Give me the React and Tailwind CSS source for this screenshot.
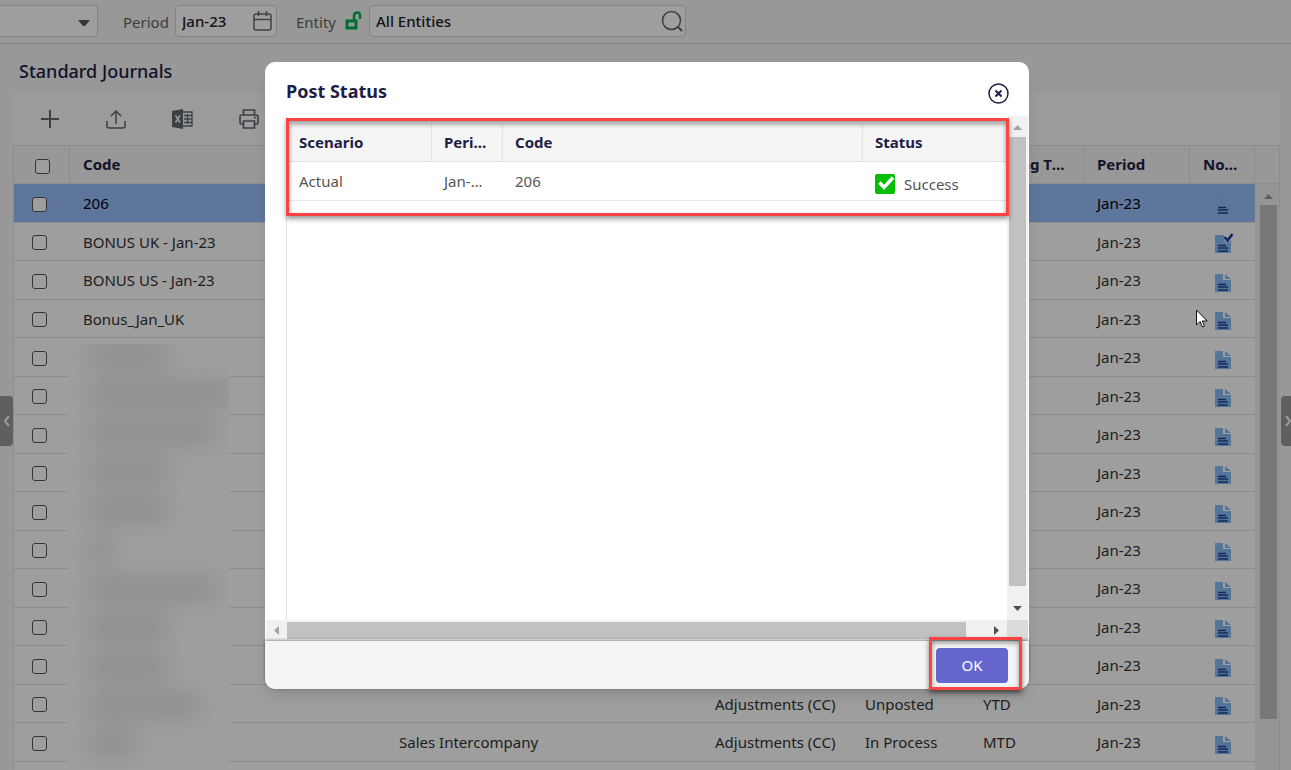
import React, { useState } from 'react';

const columns = [
  { id: 'code', label: 'Code', width: 'w-[316px]' },
  { id: 'description', label: 'Description', width: '' },
  { id: 'type', label: 'Journal Type', width: 'w-[150px]' },
  { id: 'status', label: 'Status', width: 'w-[118px]' },
  { id: 'posting', label: 'Posting Type', width: 'w-[114px]' },
  { id: 'period', label: 'Period', width: 'w-[106px]' },
  { id: 'notes', label: 'Notes', width: 'w-[65px]' },
];

const journals = [
  { code: '206', selected: true },
  { code: 'BONUS UK - Jan-23', checked: true },
  { code: 'BONUS US - Jan-23' },
  { code: 'Bonus_Jan_UK' },
  {}, {}, {}, {}, {}, {}, {}, {}, {},
  { type: 'Adjustments (CC)', status: 'Unposted', posting: 'YTD' },
  { description: 'Sales Intercompany', type: 'Adjustments (CC)', status: 'In Process', posting: 'MTD' },
];

// Widths of the hidden journal codes
const hiddenCodes = ['w-20', 'w-36', 'w-32', 'w-20', 'w-20', 'w-6', 'w-32', 'w-20', 'w-20', 'w-28', 'w-12'];

function NoteIcon({ checked, selected }) {
  const fill = selected ? '#91bdf6' : '#87bdf5';

  return (
    <svg className="block w-[18px] h-5 mt-[3px]" viewBox="0 0 18 20" aria-hidden="true">
      <path d={checked ? 'M0 2h9v5l3 3 4-3v13H0z' : 'M0 2h8v6h8v12H0z'} fill={fill} />
      {!checked && <path d="M10 2l6 5h-6z" fill={fill} />}
      <path d="M3 12.500h8M3 15h10M3 18h10" stroke="#253f8e" strokeWidth="1.3" />
      {checked && <path d="M9.500 4l3 3.500L17.500 1" stroke="#1c35a5" strokeWidth="2.5" fill="none" />}
    </svg>
  );
}

function TopBar() {
  return (
    <header className="flex items-center h-11 border-b border-[#d8d8d8] bg-[#f5f5f5] text-[#666]">
      <button aria-label="Scenario" className="flex items-center justify-end w-[98px] h-8 pr-[7px] -mt-px bg-white border border-l-0 border-[#d4d4d4] rounded-r-sm">
        <svg className="w-3 h-2 mt-1" viewBox="0 0 12 8"><path d="M0 1h12L7 7H5z" fill="#555b60" /></svg>
      </button>
      <label htmlFor="period" className="w-[45px] ml-[25px]">Period</label>
      <div className="flex items-center justify-between w-[102px] h-8 ml-[7px] pl-[6px] pr-[3px] -mt-px bg-white border border-[#d4d4d4] rounded-sm">
        <input id="period" defaultValue="Jan-23" className="w-16 text-[#222] font-medium outline-none" />
        <svg className="w-5 h-5 shrink-0" viewBox="0 0 20 20" fill="none" stroke="#666b70" strokeWidth="1.5">
          <rect x="1" y="3" width="17" height="16" rx="2" />
          <path d="M1 8.500h17M5.500 0v5M13.500 0v5" />
        </svg>
      </div>
      <label htmlFor="entity" className="w-10 ml-[19px]">Entity</label>
      <svg className="w-[17px] h-5 ml-[9px] -mt-1" viewBox="0 0 17 20" fill="none" stroke="#00b050" strokeWidth="3">
        <rect x="2" y="11" width="9" height="7" />
        <path d="M9 11V6c0-4 6-5 6-1v4" strokeWidth="2.500" />
      </svg>
      <div className="flex items-center justify-between w-[317px] h-8 ml-[7px] pl-[6px] pr-[2px] -mt-px bg-white border border-[#d4d4d4] rounded-sm">
        <input id="entity" defaultValue="All Entities" className="w-60 text-[#222] font-medium outline-none" />
        <svg className="w-[22px] h-[22px]" viewBox="0 0 22 22" fill="none" stroke="#60666b" strokeWidth="1.5">
          <circle cx="10.500" cy="10.500" r="9" />
          <path d="M17 17l4 4" strokeWidth="2" />
        </svg>
      </div>
    </header>
  );
}

function Toolbar() {
  return (
    <div className="flex items-center gap-[46px] h-[54px] shrink-0 pl-[27px] border-t border-[#eee] bg-[#fafafa] text-[#61686f]">
      <button aria-label="Add">
        <svg className="w-5 h-5" viewBox="0 0 20 20" stroke="currentColor" strokeWidth="2"><path d="M10 1v18M1 10h18" /></svg>
      </button>
      <button aria-label="Upload">
        <svg className="w-5 h-5" viewBox="0 0 20 20" fill="none" stroke="currentColor" strokeWidth="1.500">
          <path d="M1 12v5q0 2 2 2h14q2 0 2-2v-5M10 15V2M5 7l5-5 5 5" />
        </svg>
      </button>
      <button aria-label="Export to Excel">
        <svg className="w-[21px] h-5" viewBox="0 0 21 20">
          <path d="M0 2l11-2v20L0 18z" fill="currentColor" />
          <path d="M11 3h9v14h-9M12 6.500h8M12 10h8M12 13.500h8M15.500 5v10" fill="none" stroke="currentColor" strokeWidth="1.300" />
          <path d="M3.500 6.500l4.500 7M8 6.500l-4.500 7" stroke="#fafafa" strokeWidth="1.500" />
        </svg>
      </button>
      <button aria-label="Print">
        <svg className="w-5 h-5" viewBox="0 0 20 20" fill="none" stroke="currentColor" strokeWidth="1.700">
          <path d="M4.500 6V1h11v5M4.500 15H2.500Q1 15 1 13.500V8q0-2 2-2h14q2 0 2 2v5.500q0 1.500-1.500 1.500h-2M4.500 12h11v7h-11z" />
          <path d="M15 8.500h2" />
        </svg>
      </button>
    </div>
  );
}

function JournalTable() {
  return (
    <div className="relative flex flex-1 items-start border-x border-t border-[#e4e4e4] bg-white">
      <table className="flex-1 w-full table-fixed border-separate border-spacing-0">
        <thead>
          <tr className="h-[38px] bg-[#f5f5f5] text-left text-[#1e1e46]">
            <th className="w-14 p-0 border-r border-b border-[#e4e4e4]">
              <input type="checkbox" aria-label="Select all" className="block ml-[21px] w-[15px] h-[15px] mt-[3px] appearance-none rounded-[3px] border border-[#555] bg-white" />
            </th>
            {columns.map((col) => (
              <th key={col.id} className={`${col.width} pl-[13px] pr-3 pt-0 pb-[2px] truncate font-bold border-r border-b border-[#e4e4e4]`}>{col.label}</th>
            ))}
          </tr>
        </thead>
        <tbody className="text-[#333] [&>tr>td]:border-b [&>tr>td]:border-[#e4e4e4] [&>tr>td]:py-0">
          {journals.map((row, i) => (
            <tr key={i} className={`odd:h-[39px] even:h-[38px] ${row.selected ? 'bg-[#99bffc] text-black' : ''}`}>
              <td className="px-0">
                <input type="checkbox" aria-label={`Select row ${i + 1}`} className="block ml-[18px] mt-[2px] w-[15px] h-[15px] appearance-none rounded-[3px] border border-[#555] bg-white" />
              </td>
              <td className="px-[13px]">{row.code}</td>
              <td className="px-[13px]">{row.description}</td>
              <td className="px-[13px] whitespace-nowrap">{row.type}</td>
              <td className="px-[13px] whitespace-nowrap">{row.status}</td>
              <td className="px-[13px]">{row.posting}</td>
              <td className="px-[13px]">Jan-23</td>
              <td className="pl-[25px]">
                <NoteIcon checked={row.checked} selected={row.selected} />
              </td>
            </tr>
          ))}
        </tbody>
      </table>
      <div className="flex flex-col self-stretch w-6 shrink-0 bg-[#f0f0f0]">
        <div className="h-[38px] border-b border-[#e4e4e4] bg-[#f5f5f5]" />
        <div className="flex flex-col items-center w-[21px] ml-[3px]">
          <svg className="w-[9px] h-5 mt-px" viewBox="0 0 9 20"><path d="M0 14h9L4.500 9z" fill="#999" /></svg>
          <div className="w-[17px] h-[514px] bg-[#c1c1c1]" />
        </div>
      </div>
      <div className="absolute left-[54px] top-[198px] bottom-0 w-[161px] overflow-hidden bg-white">
        <div className="flex flex-col gap-[18px] pl-5 blur-[12px]">
          {hiddenCodes.map((width, i) => (
            <div key={i} className={`${width} h-[21px] shrink-0 bg-[#e2e2e2]`} />
          ))}
        </div>
      </div>
    </div>
  );
}

function PostStatusDialog({ onClose }) {
  return (
    <div role="dialog" aria-modal="true" aria-labelledby="post-status" className="relative flex flex-col w-[764px] h-[627px] rounded-[10px] bg-white shadow-lg">
      <div className="flex items-center justify-between h-[54px] pl-[21px] pr-5 pt-1">
        <h2 id="post-status" className="text-lg font-bold text-[#1e1e46]">Post Status</h2>
        <button aria-label="Close" onClick={onClose} className="mt-1">
          <svg className="w-[21px] h-[21px]" viewBox="0 0 21 21" fill="none" stroke="#1e1e46" strokeWidth="1.500">
            <circle cx="10.500" cy="10.500" r="9.500" />
            <path d="M7.500 7.500l6 6M13.500 7.500l-6 6" strokeWidth="2" />
          </svg>
        </button>
      </div>
      <div className="flex flex-1 min-h-0">
        <div className="flex-1 ml-[21px] pt-[7px] border-l border-[#e4e4e4]">
          <table className="w-full table-fixed border-separate border-spacing-0 text-left">
            <thead>
              <tr className="h-[39px] bg-[#f5f5f5] text-[#1e1e46] [&>th]:border-b [&>th]:border-[#e4e4e4] [&>th]:px-3 [&>th]:py-0 [&>th]:truncate">
                <th className="w-[145px] border-r">Scenario</th>
                <th className="w-[71px] border-r">Period</th>
                <th className="border-r">Code</th>
                <th className="w-36">Status</th>
              </tr>
            </thead>
            <tbody>
              <tr className="h-[39px] text-[#555] [&>td]:border-b [&>td]:border-[#e8e8e8] [&>td]:pl-3 [&>td]:pr-4 [&>td]:py-0 [&>td]:truncate">
                <td>Actual</td>
                <td>Jan-23</td>
                <td>206</td>
                <td>
                  <div className="flex items-center gap-[9px] mt-[6px]">
                    <svg className="w-5 h-5" viewBox="0 0 20 20">
                      <rect width="20" height="20" rx="2" fill="#04bf04" />
                      <path d="M4.500 8.500l4.500 5 9-10" fill="none" stroke="#fff" strokeWidth="3.500" />
                    </svg>
                    Success
                  </div>
                </td>
              </tr>
            </tbody>
          </table>
        </div>
        <div className="flex flex-col items-center w-[21px] mr-px bg-[#f1f1f1]">
          <svg className="w-[9px] h-[21px] shrink-0" viewBox="0 0 9 21"><path d="M0 14h9L4.500 9z" fill="#a3a3a3" /></svg>
          <div className="w-[17px] h-[449px] shrink-0 bg-[#c1c1c1]" />
          <svg className="w-[9px] h-[34px] shrink-0" viewBox="0 0 9 34"><path d="M0 20h9L4.500 25z" fill="#505050" /></svg>
        </div>
      </div>
      <div className="flex items-center h-[21px] mx-px bg-[#f1f1f1]">
        <svg className="w-[21px] h-[9px]" viewBox="0 0 21 9"><path d="M13 0v9L8 4.500z" fill="#a3a3a3" /></svg>
        <div className="w-[679px] h-[17px] bg-[#c1c1c1]" />
        <svg className="w-5 h-[9px] ml-auto" viewBox="0 0 20 9"><path d="M7 0v9l5-4.500z" fill="#505050" /></svg>
        <div className="w-[21px] h-[21px] bg-[#dcdcdc]" />
      </div>
      <footer className="flex items-center justify-end h-12 pr-[21px] rounded-b-[10px] bg-[#f5f5f5] shadow-[0_-1px_3px_rgba(0,0,0,0.4)]">
        <button onClick={onClose} className="w-[72px] h-[35px] rounded bg-[#6666cf] text-white">OK</button>
      </footer>
      <div className="absolute left-[21px] top-[56px] w-[723px] h-[98px] border-3 border-[#fc4444] shadow-[0_3px_5px_rgba(0,0,0,0.4),inset_0_3px_5px_rgba(0,0,0,0.4)] pointer-events-none" />
      <div className="absolute left-[664px] top-[575px] w-[93px] h-[53px] border-3 border-[#fc4444] shadow-[0_3px_5px_rgba(0,0,0,0.5),inset_0_3px_5px_rgba(0,0,0,0.4)] pointer-events-none" />
    </div>
  );
}

export default function App() {
  const [isOpen, setIsOpen] = useState(true);

  return (
    <div className="relative flex flex-col h-screen overflow-hidden bg-[#f5f5f5] font-['Noto_Sans','Open_Sans',sans-serif] text-[15px] leading-5">
      <TopBar />
      <main className="flex flex-col flex-1 pl-[13px] pr-[11px]">
        <h1 className="h-[47px] shrink-0 pt-[13px] pl-[6px] text-lg font-medium text-[#1e1e46]">Standard Journals</h1>
        <Toolbar />
        <JournalTable />
      </main>

      <button aria-label="Expand left panel" className="absolute left-0 top-[396px] flex items-center justify-center w-[13px] h-[50px] rounded-r-sm bg-[#999]">
        <svg className="w-[6px] h-[10px]" viewBox="0 0 6 10" fill="none" stroke="#fff" strokeWidth="2"><path d="M5 0L1 5l4 5" /></svg>
      </button>
      <button aria-label="Expand right panel" className="absolute right-0 top-[396px] flex items-center justify-end w-[10px] h-[50px] rounded-l-sm bg-[#999]">
        <svg className="w-[6px] h-[10px]" viewBox="0 0 6 10" fill="none" stroke="#fff" strokeWidth="2"><path d="M1 0l4 5-4 5" /></svg>
      </button>

      {isOpen && (
        <div className="absolute inset-0 flex items-start justify-center pl-[3px] pt-[62px] bg-black/38">
          <PostStatusDialog onClose={() => setIsOpen(false)} />
        </div>
      )}

      {/* Mouse pointer */}
      <svg className="absolute left-[1196px] top-[309px] w-3 h-[19px] pointer-events-none" viewBox="0 0 12 19">
        <path d="M.5 1v15l3.500-3.500L6.500 18l2-1-2.300-5h5z" fill="#fff" stroke="#111" />
      </svg>
    </div>
  );
}
